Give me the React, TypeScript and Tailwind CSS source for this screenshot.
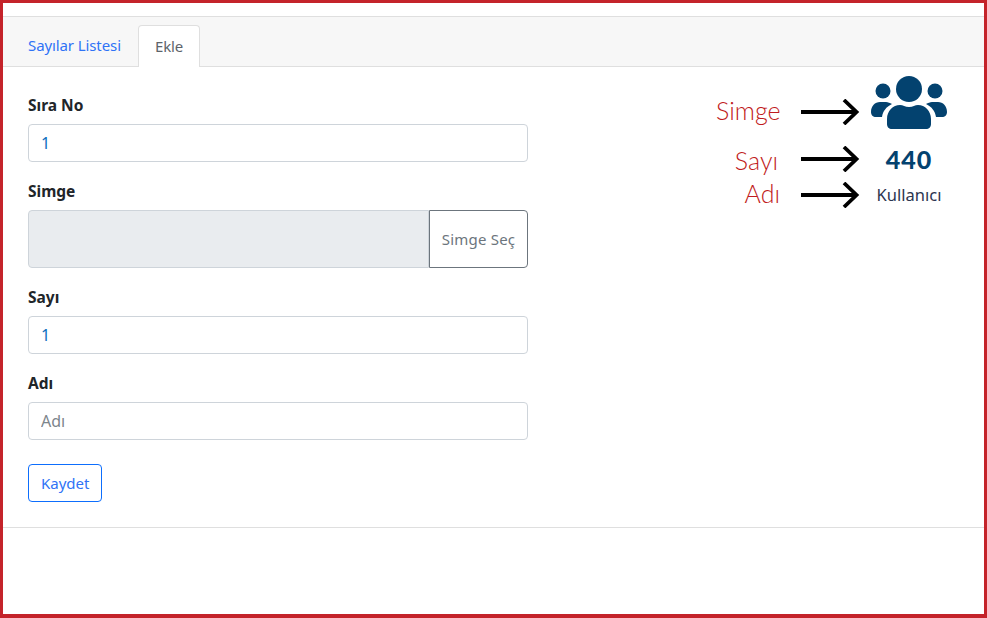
import { ReactNode } from 'react';

const inputClass =
  'h-[38px] w-full rounded-[4px] border border-[#ced4da] bg-white px-3 text-base text-[#0a6ebd] outline-none placeholder:text-[#7d858c]';

function Field({ label, children }: { label: string; children: ReactNode }) {
  return (
    <div className="mb-[17px]">
      <label className="mb-[7px] block h-[24px] text-[15.5px] leading-[24px] font-bold text-[#212529]">{label}</label>
      {children}
    </div>
  );
}

function Arrow() {
  return (
    <svg width="60" height="26" viewBox="0 0 60 26" fill="none" stroke="#000" strokeWidth="3.8" className="shrink-0">
      <path d="M0 13H55" />
      <path d="M43 1L55.5 13L43 25" />
    </svg>
  );
}

function UsersIcon() {
  return (
    <svg width="76" height="54" viewBox="0 0 76 54" fill="#03426f">
      <circle cx="38" cy="13" r="13" />
      <circle cx="12" cy="15" r="7.5" />
      <circle cx="64" cy="15" r="7.5" />
      <path d="M21 53c-3 0-5-2-5-5v-5c0-8 6-14 13-14 3 0 5 2 9 2s6-2 9-2c7 0 13 6 13 14v5c0 3-2 5-5 5Z" />
      <path d="M0 36c0-6 4-10 9-10h6c2 0 4 1 6 2-6 3-9 7-10 13H5c-3 0-5-2-5-5Z" />
      <path d="M76 36c0-6-4-10-9-10h-6c-2 0-4 1-6 2 6 3 9 7 10 13h6c3 0 5-2 5-5Z" />
    </svg>
  );
}

export default function App() {
  return (
    <div className="flex h-[618px] w-[987px] flex-col border-[3px] border-b-4 border-[#c4232a] bg-white font-['Noto_Sans',sans-serif]">
      <div className="mt-[13px] flex h-[51px] items-end border-y border-[#dfdfdf] bg-[#f7f7f7] pl-[9px] pt-[8px]">
        <a className="flex h-[41px] items-center pl-4 pr-[17px] text-[15px] tracking-[-0.1px] text-[#2f73f6]">Sayılar Listesi</a>
        <a className="relative top-px flex h-[42px] items-center rounded-t-[4px] border border-b-0 border-[#dfdfdf] bg-white px-4 text-[15px] tracking-[-0.1px] text-[#5c636a]">
          Ekle
        </a>
      </div>

      <div className="flex h-[461px] border-b border-[#dfdfdf]">
        <form className="ml-[25px] mt-[26px] w-[500px]">
          <Field label="Sıra No">
            <input className={inputClass} defaultValue="1" />
          </Field>
          <Field label="Simge">
            <div className="flex h-[58px]">
              <div className="flex-1 rounded-l-[4px] border border-[#ced4da] bg-[#e9ecef]" />
              <button type="button" className="w-[99px] rounded-r-[4px] border border-[#6c757d] bg-white text-[15px] tracking-[0.2px] text-[#6c757d]">
                Simge Seç
              </button>
            </div>
          </Field>
          <Field label="Sayı">
            <input className={inputClass} defaultValue="1" />
          </Field>
          <Field label="Adı">
            <input className={inputClass} placeholder="Adı" />
          </Field>
          <button type="button" className="mt-[7px] h-[38px] rounded-[4px] border border-[#0d6efd] bg-white px-3 text-[15px] text-[#2f73f6]">
            Kaydet
          </button>
        </form>

        <div className="ml-[188px] mt-[9px] grid h-fit grid-cols-[85px_58px_100px] grid-rows-[72px_22px_50px] font-['Lato',sans-serif]">
          <span className="pr-[21px] text-right text-[25px] leading-[68px] font-light text-[#bf1a20]">Simge</span>
          <div className="flex items-center"><Arrow /></div>
          <div className="flex justify-center"><UsersIcon /></div>

          <span className="pr-[23px] text-right text-[25px] leading-[24px] font-light text-[#bf1a20]">Sayı</span>
          <div className="flex items-center"><Arrow /></div>
          <div className="text-center text-[25px] leading-[22px] font-black tracking-[1px] text-[#03426f]">440</div>

          <span className="pr-[21px] text-right text-[25px] leading-[46px] font-light text-[#bf1a20]">Adı</span>
          <div className="flex items-center"><Arrow /></div>
          <div className="text-center font-['Noto_Sans',sans-serif] text-[16.5px] leading-[50px] text-[#2c3550]">Kullanıcı</div>
        </div>
      </div>
    </div>
  );
}
